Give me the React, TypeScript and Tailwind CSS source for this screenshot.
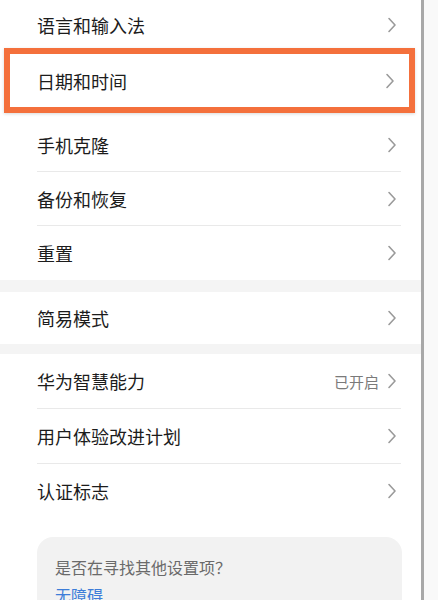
import React from "react";

const Chevron = () => (
  <svg width="10" height="16" viewBox="0 0 10 16" fill="none" className="shrink-0">
    <path d="M2 1.5 L8 8 L2 14.5" stroke="#9a9a9a" strokeWidth="1.6" strokeLinecap="round" strokeLinejoin="round" />
  </svg>
);

const Row = ({
  label,
  value,
  divider,
  h = "h-[54px]",
}: {
  label: string;
  value?: string;
  divider?: boolean;
  h?: string;
}) => (
  <div className="flex flex-col shrink-0">
    <div className={`flex items-center justify-between pl-[37px] pr-[24px] shrink-0 ${h}`}>
      <span className="text-[18px] text-[#1c1c1c] leading-none">{label}</span>
      <div className="flex items-center gap-[8px]">
        {value && <span className="text-[15px] text-[#7a7a7a] leading-none">{value}</span>}
        <Chevron />
      </div>
    </div>
    {divider && <div className="ml-[37px] mr-[20px] h-px bg-[#e9e9e9] shrink-0" />}
  </div>
);

export default function App() {
  return (
    <div
      className="w-[438px] h-[600px] overflow-hidden flex bg-white"
      style={{ fontFamily: '"Noto Sans CJK SC", "Noto Sans", sans-serif' }}
    >
      <div className="w-[421px] flex flex-col bg-white overflow-hidden">
        <Row label="语言和输入法" h="h-[50px]" />
        <div className="shrink-0 mt-[-2px] ml-[4px] mr-[6px] border-[6px] border-[#f4703c] shadow-[0_1px_3px_rgba(0,0,0,0.15)]">
          <div className="flex items-center justify-between pl-[27px] pr-[14px] h-[53px]">
            <span className="text-[18px] text-[#1c1c1c] leading-none">日期和时间</span>
            <Chevron />
          </div>
        </div>
        <div className="h-[5px] shrink-0" />
        <Row label="手机克隆" divider h="h-[53px]" />
        <Row label="备份和恢复" divider h="h-[53px]" />
        <Row label="重置" />
        <div className="h-[12px] bg-[#f4f4f4] shrink-0" />
        <Row label="简易模式" h="h-[52px]" />
        <div className="h-[10px] bg-[#f4f4f4] shrink-0" />
        <Row label="华为智慧能力" value="已开启" divider />
        <Row label="用户体验改进计划" divider />
        <Row label="认证标志" />
        <div className="h-[19px] shrink-0" />
        <div className="shrink-0 ml-[37px] mr-[19px] rounded-[16px] bg-[#f2f2f2] pt-[19px] pl-[18px] pb-[20px]">
          <div className="text-[16px] text-[#6a6a6a] leading-[22px]">是否在寻找其他设置项？</div>
          <div className="mt-[6px] text-[16px] text-[#3d7dd8] leading-[22px]">无障碍</div>
        </div>
      </div>
      <div className="w-[3px] bg-[#a8a8a8] shrink-0" />
      <div className="flex-1 bg-[#f9f9f9]" />
    </div>
  );
}
